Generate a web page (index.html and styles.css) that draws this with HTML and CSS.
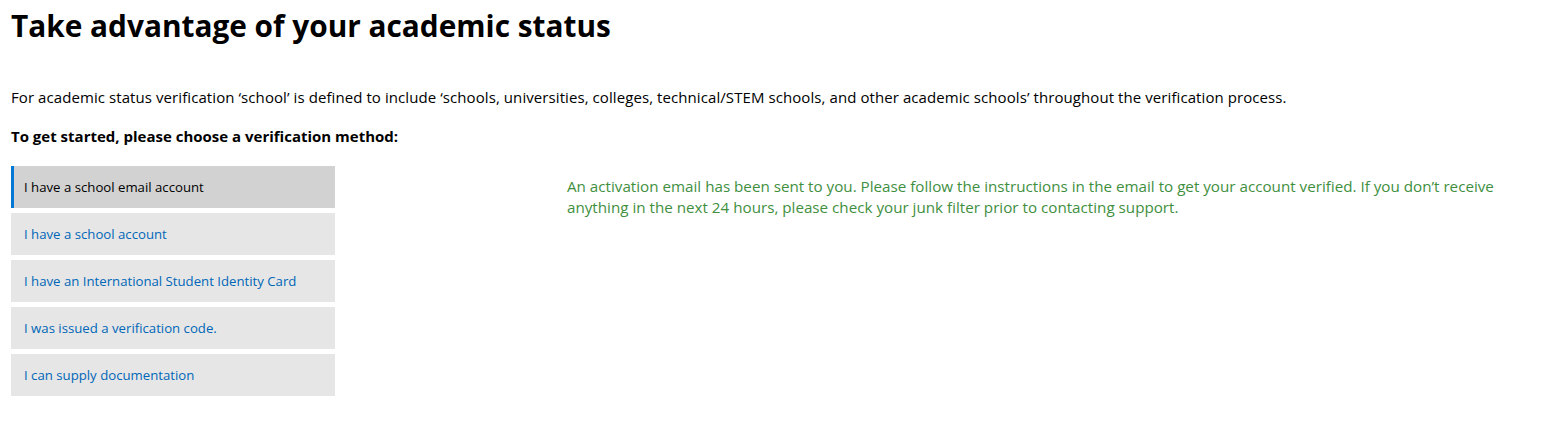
FILE: index.html
```html
<!DOCTYPE html>
<html lang="en">
<head>
<meta charset="utf-8">
<title>Academic verification</title>
<link rel="stylesheet" href="styles.css">
</head>
<body>
<main class="page">
  <h1 class="title">Take advantage of your academic status</h1>
  <p class="intro">For academic status verification ‘school’ is defined to include ‘schools, universities, colleges, technical/STEM schools, and other academic schools’ throughout the verification process.</p>
  <p class="prompt">To get started, please choose a verification method:</p>
  <div class="layout">
    <ul class="methods">
      <li class="method active"><a href="#">I have a school email account</a></li>
      <li class="method"><a href="#">I have a school account</a></li>
      <li class="method"><a href="#">I have an International Student Identity Card</a></li>
      <li class="method"><a href="#">I was issued a verification code.</a></li>
      <li class="method"><a href="#">I can supply documentation</a></li>
    </ul>
    <div class="message">An activation email has been sent to you. Please follow the instructions in the email to get your account verified. If you don’t receive anything in the next 24 hours, please check your junk filter prior to contacting support.</div>
  </div>
</main>
</body>
</html>
```
FILE: styles.css
```css
* { box-sizing: border-box; }
html, body { margin: 0; background: #fff; }
body {
  font-family: "Open Sans", "Noto Sans", "Liberation Sans", sans-serif;
  color: #000;
}
.page { padding: 0 11px; }
.title {
  margin: 0;
  padding-top: 6px;
  font-size: 29.8px;
  line-height: 40px;
  font-weight: 700;
}
.intro {
  margin: 41px 0 0;
  font-size: 15px;
  letter-spacing: 0.08px;
  line-height: 20px;
}
.prompt {
  margin: 19px 0 0;
  font-size: 15px;
  line-height: 20px;
  font-weight: 700;
}
.layout {
  display: flex;
  margin-top: 20px;
}
.methods {
  list-style: none;
  margin: 0;
  padding: 0;
  width: 324px;
  flex: none;
  display: flex;
  flex-direction: column;
  gap: 5px;
}
.method {
  height: 42px;
  background: #e6e6e6;
  display: flex;
  align-items: center;
  padding-left: 13px;
  font-size: 13.2px;
}
.method a { color: #0067b8; text-decoration: none; }
.method.active {
  background: #d2d2d2;
  border-left: 3px solid #0078d4;
  padding-left: 10px;
}
.method.active a { color: #000; }
.message {
  margin-left: 232px;
  margin-top: 10px;
  width: 960px;
  font-size: 15.2px;
  line-height: 21px;
  color: #3f8f3f;
}
```
